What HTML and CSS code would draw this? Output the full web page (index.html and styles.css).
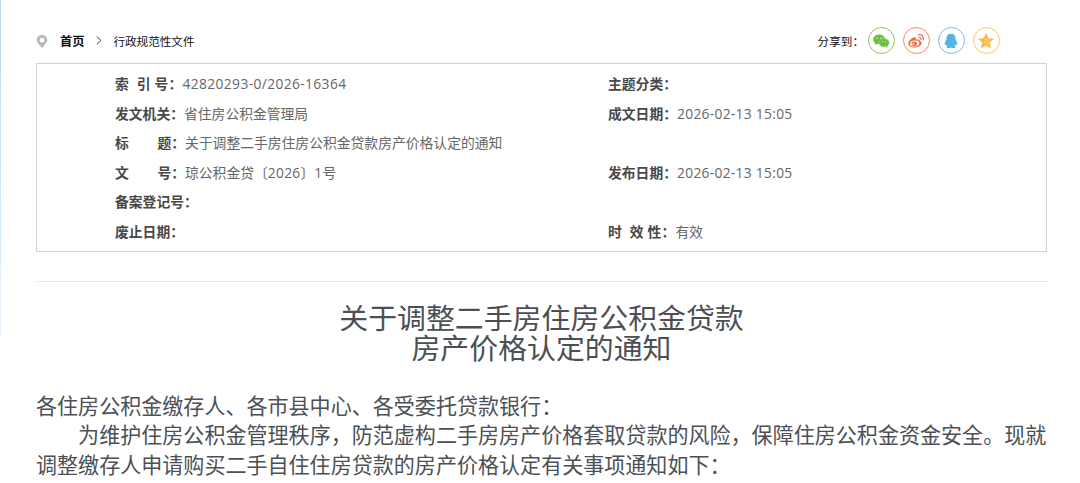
FILE: index.html
```html
<!DOCTYPE html>
<html lang="zh-CN">
<head>
<meta charset="UTF-8">
<meta name="viewport" content="width=device-width, initial-scale=1.0">
<title>关于调整二手房住房公积金贷款房产价格认定的通知</title>
<link rel="stylesheet" href="styles.css">
</head>
<body>

<div class="page">
    <div class="topbar">
        <div class="crumb">
            <svg class="pin" viewBox="0 0 12 15" width="12" height="15">
                <path d="M6 0.8a5.3 5.3 0 0 0-5.3 5.3c0 3.1 3.3 4.7 5.3 8.3 2-3.6 5.3-5.2 5.3-8.3A5.3 5.3 0 0 0 6 .8zm0 3a2.4 2.4 0 1 1 0 4.8 2.4 2.4 0 0 1 0-4.8z" fill="#b9b9b9" fill-rule="evenodd"/>
            </svg>
            <a class="home">首页</a>
            <svg class="arrow" viewBox="0 0 6 9" width="6" height="9">
                <path d="M.8.6l4.2 3.9L.8 8.4" fill="none" stroke="#444" stroke-width="1"/>
            </svg>
            <a class="current">行政规范性文件</a>
        </div>
        <div class="share">
            <span class="share-label">分享到：</span>
            <a class="share-btn wechat">
                <svg viewBox="0 0 18 18" width="18" height="18">
                    <path d="M7.2 2.6C3.9 2.6 1.2 4.7 1.2 7.4c0 1.5.8 2.8 2.1 3.7l-.5 1.8 2.1-1.1c.7.2 1.5.3 2.3.3 3.3 0 6-2.1 6-4.7s-2.7-4.8-6-4.8z" fill="#6cbf40"/>
                    <path d="M12 6.6c2.9 0 5.2 1.8 5.2 4.2 0 1.3-.7 2.4-1.800 3.2l.4 1.5-1.800-.9c-.6.2-1.300.3-2 .3-2.800 0-5.100-1.800-5.100-4.100 0-2.400 2.300-4.200 5.100-4.200z" fill="#6cbf40" stroke="#b9e2a2" stroke-width=".5"/>
                    <g fill="#d8f0cb">
                        <circle cx="5.3" cy="6" r=".7"/>
                        <circle cx="9.2" cy="6" r=".7"/>
                        <circle cx="10.4" cy="9.6" r=".6"/>
                        <circle cx="13.7" cy="9.6" r=".6"/>
                    </g>
                </svg>
            </a>
            <a class="share-btn weibo">
                <svg viewBox="0 0 18 18" width="18" height="18">
                    <path d="M7.5 5.2C5 5.6 1.3 8.6 1.3 11.5c0 2.5 3 4.1 6.3 4.1 4 0 7-2.2 7-4.5 0-1.3-1-2-2-2.3.4-1.3-.4-2.3-3.6-1.1.4-1.4.1-2.7-1.5-2.5z" fill="#ee6c49"/>
                    <ellipse cx="7.7" cy="11.5" rx="4.6" ry="3" fill="#fff" transform="rotate(-8 7.7 11.5)"/>
                    <ellipse cx="7.3" cy="11.7" rx="2.7" ry="2.3" fill="#ee6c49"/>
                    <circle cx="6.5" cy="12.1" r=".9" fill="#fff"/>
                    <path d="M11.6 2.8c3-.5 5.500 1.900 4.700 5.200M11.900 5.300c1.600-.2 2.500.8 2.200 2.300" fill="none" stroke="#ee6c49" stroke-width="1.2" stroke-linecap="round"/>
                </svg>
            </a>
            <a class="share-btn qq">
                <svg viewBox="0 0 18 18" width="18" height="18">
                    <path d="M9 1.800c-3 0-4.700 2-4.600 4.900 0 1.500-1.800 3.300-1.800 5.400 0 1 .5 1.300 1.500.1.200.9.600 1.500 1.200 2.100-1.100.4-1.200 1.800.6 1.900 1.200 0 2.300-.2 3.100-.7.800.5 1.900.7 3.100.7 1.800-.1 1.700-1.500.6-1.900.6-.6 1-1.200 1.200-2.100 1 1.200 1.500.9 1.500-.1 0-2.100-1.800-3.900-1.800-5.400C13.700 3.800 12 1.800 9 1.800z" fill="#56b3e6"/>
                </svg>
            </a>
            <a class="share-btn qzone">
                <svg viewBox="0 0 18 18" width="18" height="18">
                    <path d="M9 1.500l2.200 4.900 5.300.6-4 3.600 1.200 5.300L9 13.200l-4.700 2.700 1.200-5.300-4-3.600 5.300-.6z" fill="#fdb84b" stroke="#fdb84b" stroke-width=".6" stroke-linejoin="round"/>
                    <path d="M7 7.900c1.500-.4 2.900-.4 4.200-.1l-3.700 3.100c1.400.3 2.800.3 4.200 0" fill="none" stroke="#ffe3b3" stroke-width=".6"/>
                </svg>
            </a>
        </div>
    </div>

    <div class="info">
        <div class="row">
            <div class="cell"><b class="w1"><i>索</i><i class="mid">引</i><i>号：</i></b><span class="num code">42820293-0/2026-16364</span></div>
            <div class="cell"><b>主题分类：</b></div>
        </div>
        <div class="row">
            <div class="cell"><b class="w2">发文机关：</b><span>省住房公积金管理局</span></div>
            <div class="cell"><b class="w2">成文日期：</b><span class="num">2026-02-13 15:05</span></div>
        </div>
        <div class="row">
            <div class="cell"><b class="w3"><i>标</i><i>题：</i></b><span>关于调整二手房住房公积金贷款房产价格认定的通知</span></div>
        </div>
        <div class="row">
            <div class="cell"><b class="w3"><i>文</i><i>号：</i></b><span>琼公积金贷〔<span class="num">2026</span>〕<span class="num">1</span>号</span></div>
            <div class="cell"><b class="w2">发布日期：</b><span class="num">2026-02-13 15:05</span></div>
        </div>
        <div class="row">
            <div class="cell"><b>备案登记号：</b></div>
        </div>
        <div class="row">
            <div class="cell"><b>废止日期：</b></div>
            <div class="cell"><b class="w1"><i>时</i><i class="mid">效</i><i>性：</i></b><span>有效</span></div>
        </div>
    </div>

    <div class="article">
        <h1>关于调整二手房住房公积金贷款<br>房产价格认定的通知</h1>
        <div class="content">
            <p>各住房公积金缴存人、各市县中心、各受委托贷款银行：</p>
            <p class="indent">为维护住房公积金管理秩序，防范虚构二手房房产价格套取贷款的风险，保障住房公积金资金安全。现就<br>调整缴存人申请购买二手自住住房贷款的房产价格认定有关事项通知如下：</p>
        </div>
    </div>
</div>

</body>
</html>
```
FILE: styles.css
```css
* {
    box-sizing: border-box;
}
body {
    margin: 0;
    height: 483px;
    overflow: hidden;
    background: linear-gradient(#b9d9f0, #e6f2fb) no-repeat 0 0 / 1px 336px #fff;
    font-family: "Noto Sans CJK SC", sans-serif;
    color: #4c5054;
}
.page {
    width: 1011px;
    margin-left: 36px;
    padding-top: 19px;
}
.topbar {
    display: flex;
    justify-content: space-between;
    height: 44px;
    padding-right: 47px;
    font-size: 11.6px;
    line-height: 44px;
    color: #111;
}
.crumb, .share {
    display: flex;
    align-items: center;
    height: 43px;
}
.pin {
    margin: 2px 12px 0 0;
}
.home {
    font-weight: bold;
    font-size: 12.2px;
}
.arrow {
    margin: 0 11px 0 12px;
}
.share-label {
    margin-right: 4px;
}
.share-btn {
    display: flex;
    align-items: center;
    justify-content: center;
    width: 27px;
    height: 27px;
    margin-right: 8px;
    border: 1px solid;
    border-radius: 50%;
}
.share-btn svg {
    margin-right: 1px;
}
.share-btn:last-child {
    margin-right: 0;
}
.wechat {
    border-color: #7cc957;
}
.weibo {
    border-color: #f28a6b;
}
.qq {
    border-color: #74bfea;
}
.qzone {
    border-color: #fbc469;
}
.info {
    height: 189px;
    padding: 5px 0 0 78px;
    border: 1px solid #d2d2d2;
    font-size: 13.8px;
    line-height: 29.55px;
    color: #666;
}
.row {
    display: flex;
    height: 29.55px;
}
.cell {
    display: flex;
    flex: none;
    width: 493px;
    white-space: nowrap;
}
.cell + .cell {
    width: 400px;
}
.cell b {
    color: #484848;
}
.cell i {
    font-style: normal;
}
.w1 {
    display: flex;
    width: 67.5px;
}
.w1 .mid {
    margin: 0 4px 0 8px;
}
.w2 {
    width: 69px;
}
.w3 {
    display: flex;
    justify-content: space-between;
    width: 70px;
}
.num {
    font-family: "Open Sans", sans-serif;
    letter-spacing: 0.3px;
}
.code {
    letter-spacing: 0.38px;
}
.article {
    margin-top: 29px;
    border-top: 1px solid #e6e6e6;
}
h1 {
    margin: 20px 0 0;
    font-size: 28.9px;
    font-weight: normal;
    line-height: 29.5px;
    text-align: center;
}
.content {
    margin-top: 29.5px;
    font-size: 21.06px;
    line-height: 29.6px;
    white-space: nowrap;
}
.content p {
    margin: 0;
}
.indent {
    text-indent: 2em;
}
```
